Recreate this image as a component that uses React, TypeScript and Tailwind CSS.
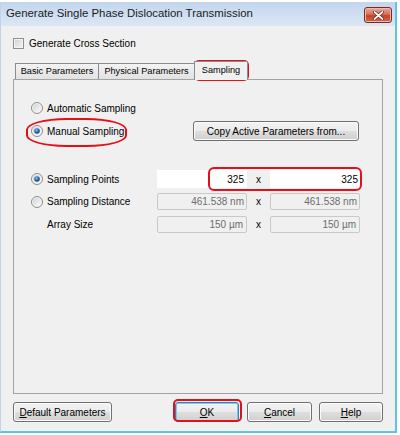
import React from "react";

function Radio({ checked }: { checked?: boolean }) {
  return (
    <svg width="12" height="12" viewBox="0 0 12 12" className="shrink-0">
      <defs>
        <linearGradient id={checked ? "rgc" : "rgu"} x1="0" y1="0" x2="1" y2="1">
          <stop offset="0" stopColor="#d4d4d4" />
          <stop offset="1" stopColor="#fbfbfb" />
        </linearGradient>
        <radialGradient id="dot" cx="0.4" cy="0.35" r="0.7">
          <stop offset="0" stopColor="#8fc3f0" />
          <stop offset="0.5" stopColor="#2a6fb6" />
          <stop offset="1" stopColor="#163d70" />
        </radialGradient>
      </defs>
      <circle cx="6" cy="6" r="5.5" fill="#f4f4f4" stroke="#8c8c8c" strokeWidth="1" />
      <circle cx="6" cy="6" r="4.2" fill={`url(#${checked ? "rgc" : "rgu"})`} />
      {checked && <circle cx="6" cy="6" r="2.8" fill="url(#dot)" />}
    </svg>
  );
}

function Btn({
  children,
  className = "",
  focused,
}: {
  children: React.ReactNode;
  className?: string;
  focused?: boolean;
}) {
  return (
    <div
      className={
        "flex items-center justify-center h-[20px] rounded-[3px] border text-[10px] text-black bg-[linear-gradient(to_bottom,#f3f3f3_0%,#ebebeb_48%,#dedede_52%,#d0d0d0_100%)] " +
        (focused
          ? "border-[#3c7fb1] shadow-[inset_0_0_0_1px_#6fd0f5] "
          : "border-[#707070] shadow-[inset_0_0_0_1px_#fbfbfb] ") +
        className
      }
    >
      {children}
    </div>
  );
}

export default function App() {
  return (
    <div className="w-[400px] h-[435px] bg-white relative overflow-hidden font-['Liberation_Sans',Arial,sans-serif] text-black">
      <div className="mt-[2px] w-[397px] h-[431px] flex flex-col border-r-2 border-b-2 border-[#5cc4e8] border-l border-l-[#c2d3e8]">
        {/* Title bar */}
        <div className="h-[24px] shrink-0 flex items-center bg-[linear-gradient(to_bottom,#c3d5ed,#dce7f5)]">
          <span className="pl-[5px] text-[11.4px] text-[#1b1b1b]">
            Generate Single Phase Dislocation Transmission
          </span>
          <div className="ml-auto mr-[3px] mt-[2px] w-[28px] h-[16px] rounded-[3px] border border-[#7a2a1e] bg-[linear-gradient(to_bottom,#e9a99b_0%,#d5705c_45%,#c2432b_55%,#cf6a4f_100%)] flex items-center justify-center shadow-[inset_0_0_0_1px_#efb9ab]">
            <svg width="11" height="9" viewBox="0 0 11 9">
              <path d="M1.5 1 L9.5 8 M9.5 1 L1.5 8" stroke="#5a1a10" strokeWidth="3" strokeLinecap="round" />
              <path d="M1.5 1 L9.5 8 M9.5 1 L1.5 8" stroke="#ffffff" strokeWidth="1.8" strokeLinecap="round" />
            </svg>
          </div>
        </div>

        {/* Body */}
        <div className="flex-1 bg-[#f0f0f0] flex flex-col pl-[12px]">
          {/* checkbox */}
          <div className="mt-[12px] h-[11px] flex items-center">
            <div className="w-[11px] h-[11px] border border-[#8e8f8f] bg-[linear-gradient(135deg,#d0d0d0,#f6f6f6)] shadow-[inset_0_0_0_1px_#f4f4f4]" />
            <span className="ml-[5px] text-[10px]">Generate Cross Section</span>
          </div>

          {/* tabs */}
          <div className="mt-[12px] flex items-end h-[18px] pl-[2px]">
            <div className="w-[84px] h-[16px] border border-b-0 border-[#898c95] bg-[linear-gradient(to_bottom,#f3f3f3,#e2e2e2)] flex items-center justify-center text-[9.2px]">
              Basic Parameters
            </div>
            <div className="-ml-px w-[97px] h-[16px] border border-b-0 border-[#898c95] bg-[linear-gradient(to_bottom,#f3f3f3,#e2e2e2)] flex items-center justify-center text-[9.2px]">
              Physical Parameters
            </div>
            <div className="-ml-px relative z-10 -mb-px w-[54px] h-[19px] border border-b-0 border-[#898c95] bg-[#f0f0f0] flex items-center justify-center text-[9.2px] pb-[1px]">
              Sampling
            </div>
          </div>

          {/* panel */}
          <div className="w-[370px] h-[315px] border border-[#a3a3a3] bg-[#f0f0f0] flex flex-col pl-[17px] text-[10px]">
            <div className="mt-[22px] h-[12px] flex items-center">
              <Radio />
              <span className="ml-[4px]">Automatic Sampling</span>
            </div>
            <div className="mt-[7px] h-[20px] flex items-center">
              <div className="w-[126px] flex items-center">
                <Radio checked />
                <span className="ml-[4px]">Manual Sampling</span>
              </div>
              <Btn className="ml-[36px] w-[166px]">Copy Active Parameters from...</Btn>
            </div>

            <div className="mt-[29px] h-[18px] flex items-center">
              <div className="w-[126px] flex items-center">
                <Radio checked />
                <span className="ml-[4px]">Sampling Points</span>
              </div>
              <div className="w-[90px] h-[18px] bg-white flex items-center justify-end pr-[3px]">325</div>
              <div className="w-[23px] text-center">x</div>
              <div className="w-[90px] h-[18px] bg-white flex items-center justify-end pr-[2px]">325</div>
            </div>

            <div className="mt-[5px] h-[17px] flex items-center">
              <div className="w-[126px] flex items-center">
                <Radio />
                <span className="ml-[4px]">Sampling Distance</span>
              </div>
              <div className="w-[90px] h-[17px] rounded-[2px] border border-[#c9c9c9] flex items-center justify-end pr-[2px] text-[#6d6d6d]">461.538 nm</div>
              <div className="w-[23px] text-center">x</div>
              <div className="w-[90px] h-[17px] rounded-[2px] border border-[#c9c9c9] flex items-center justify-end pr-[2px] text-[#6d6d6d]">461.538 nm</div>
            </div>

            <div className="mt-[6px] h-[17px] flex items-center">
              <div className="w-[126px] flex items-center pl-[16px]">
                <span>Array Size</span>
              </div>
              <div className="w-[90px] h-[17px] rounded-[2px] border border-[#c9c9c9] flex items-center justify-end pr-[3px] text-[#6d6d6d]">150 µm</div>
              <div className="w-[23px] text-center">x</div>
              <div className="w-[90px] h-[17px] rounded-[2px] border border-[#c9c9c9] flex items-center justify-end pr-[3px] text-[#6d6d6d]">150 µm</div>
            </div>
          </div>

          {/* bottom buttons */}
          <div className="mt-[8px] flex items-center pr-[12px]">
            <Btn className="w-[99px]">
              <span><span className="underline">D</span>efault Parameters</span>
            </Btn>
            <div className="ml-auto flex items-center">
              <Btn focused className="w-[64px]">
                <span><span className="underline">O</span>K</span>
              </Btn>
              <Btn className="ml-[8px] w-[65px]">
                <span><span className="underline">C</span>ancel</span>
              </Btn>
              <Btn className="ml-[7px] w-[64px]">
                <span><span className="underline">H</span>elp</span>
              </Btn>
            </div>
          </div>
        </div>
      </div>

      {/* red annotation overlays */}
      <div className="absolute left-[194px] top-[60px] w-[55px] h-[21px] border-2 border-[#e3101b] rounded-[5px] pointer-events-none" />
      <div className="absolute left-[26px] top-[118px] w-[101px] h-[29px] border-2 border-[#e3101b] rounded-[40%] pointer-events-none" />
      <div className="absolute left-[208px] top-[167px] w-[154px] h-[24px] border-2 border-[#e3101b] rounded-[6px] pointer-events-none" />
      <div className="absolute left-[173px] top-[399px] w-[69px] h-[23px] border-2 border-[#e3101b] rounded-[5px] pointer-events-none" />
    </div>
  );
}
